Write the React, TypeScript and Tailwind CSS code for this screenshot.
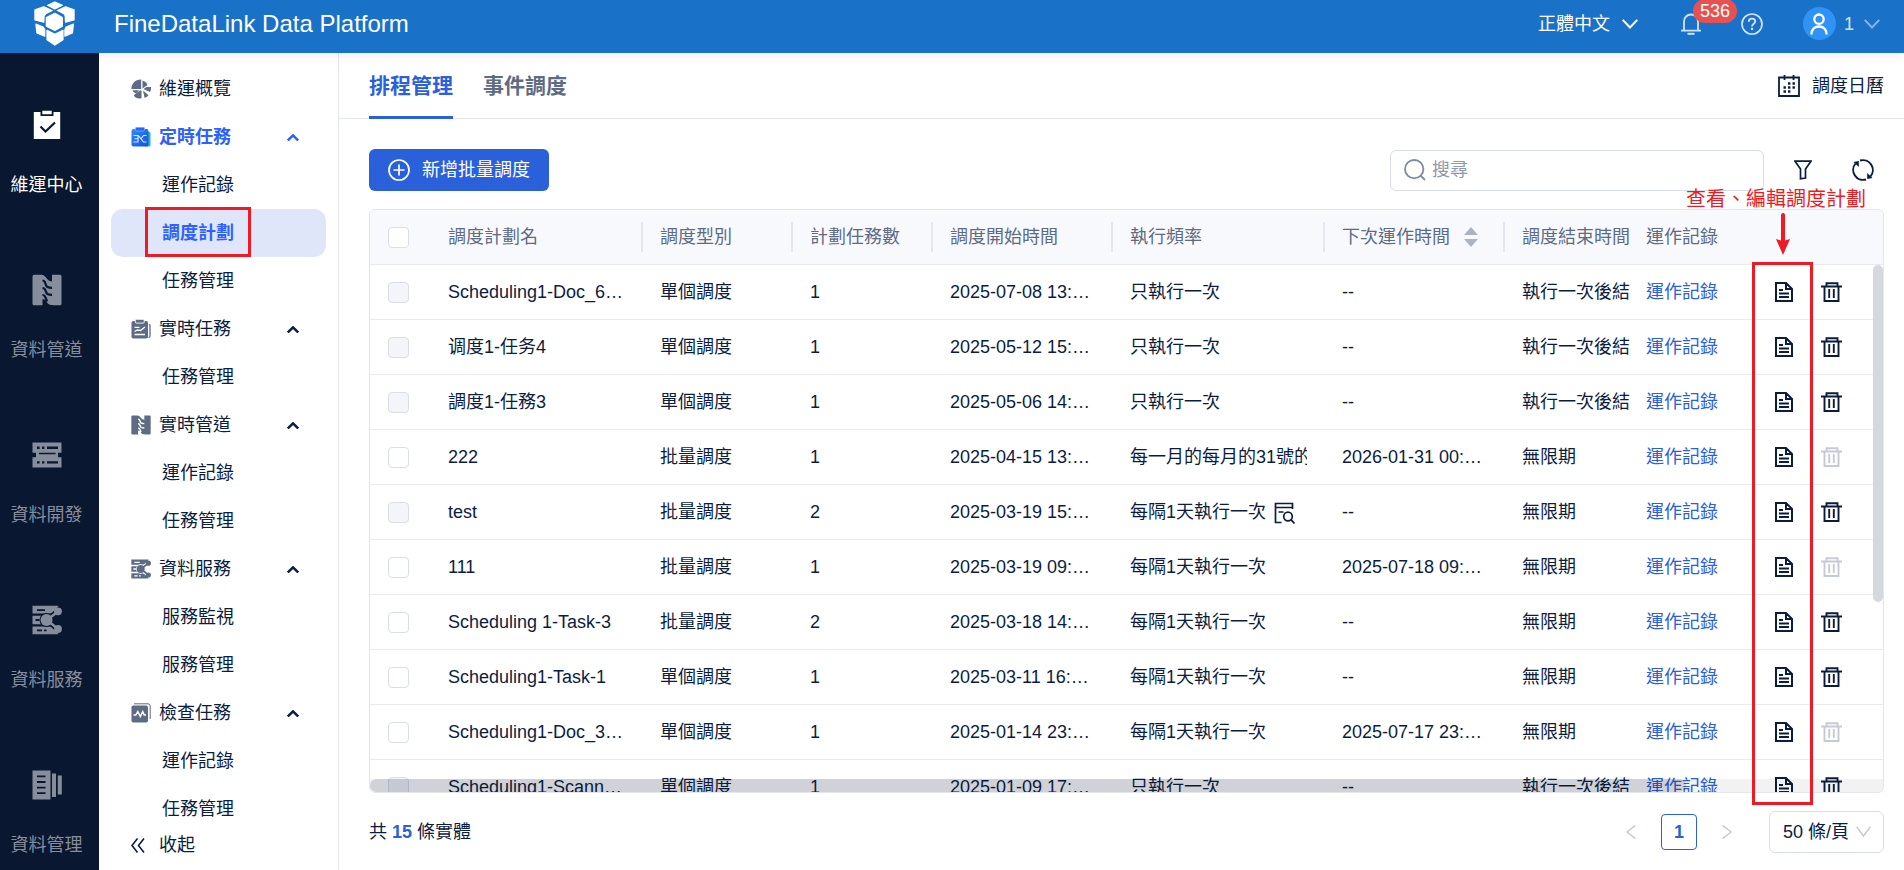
import type { ReactNode } from "react";
import clsx from "clsx";

type Row = {
  name: string;
  type: string;
  count: number;
  start: string;
  freq: string;
  next: string;
  end: string;
  locked?: boolean;
  keep?: boolean;
  detail?: boolean;
};

const ROWS: Row[] = [
  { name: "Scheduling1-Doc_6…", type: "單個調度", count: 1, start: "2025-07-08 13:…", freq: "只執行一次", next: "--", end: "執行一次後結", locked: true },
  { name: "调度1-任务4", type: "單個調度", count: 1, start: "2025-05-12 15:…", freq: "只執行一次", next: "--", end: "執行一次後結", locked: true },
  { name: "調度1-任務3", type: "單個調度", count: 1, start: "2025-05-06 14:…", freq: "只執行一次", next: "--", end: "執行一次後結", locked: true },
  { name: "222", type: "批量調度", count: 1, start: "2025-04-15 13:…", freq: "每一月的每月的31號的", next: "2026-01-31 00:…", end: "無限期", keep: true },
  { name: "test", type: "批量調度", count: 2, start: "2025-03-19 15:…", freq: "每隔1天執行一次", next: "--", end: "無限期", locked: true, detail: true },
  { name: "111", type: "批量調度", count: 1, start: "2025-03-19 09:…", freq: "每隔1天執行一次", next: "2025-07-18 09:…", end: "無限期", keep: true },
  { name: "Scheduling 1-Task-3", type: "批量調度", count: 2, start: "2025-03-18 14:…", freq: "每隔1天執行一次", next: "--", end: "無限期" },
  { name: "Scheduling1-Task-1", type: "單個調度", count: 1, start: "2025-03-11 16:…", freq: "每隔1天執行一次", next: "--", end: "無限期" },
  { name: "Scheduling1-Doc_3…", type: "單個調度", count: 1, start: "2025-01-14 23:…", freq: "每隔1天執行一次", next: "2025-07-17 23:…", end: "無限期", keep: true },
  { name: "Scheduling1-Scann…", type: "單個調度", count: 1, start: "2025-01-09 17:…", freq: "只執行一次", next: "--", end: "執行一次後結", locked: true },
];

const RAIL = [
  { label: "維運中心", icon: <ClipboardIcon />, active: true },
  { label: "資料管道", icon: <PipeIcon size={30} /> },
  { label: "資料開發", icon: <ServerIcon /> },
  { label: "資料服務", icon: <ShareIcon size={30} /> },
  { label: "資料管理", icon: <BooksIcon /> },
];

const MENU = [
  { label: "維運概覽", icon: <OverviewIcon />, items: [] },
  { label: "定時任務", icon: <TimedTaskIcon />, items: ["運作記錄", "調度計劃", "任務管理"], active: true },
  { label: "實時任務", icon: <LiveTaskIcon />, items: ["任務管理"] },
  { label: "實時管道", icon: <PipeIcon size={20} />, items: ["運作記錄", "任務管理"] },
  { label: "資料服務", icon: <ShareIcon size={20} />, items: ["服務監視", "服務管理"] },
  { label: "檢查任務", icon: <CheckTaskIcon />, items: ["運作記錄", "任務管理"] },
];

export default function App() {
  return (
    <div
      lang="zh-Hant"
      className="flex h-screen flex-col overflow-hidden bg-white font-['Liberation_Sans','Noto_Sans_CJK_TC',sans-serif] text-lg leading-6 text-[#0b1d3f]"
    >
      <TopBar />
      <div className="flex min-h-0 flex-1">
        <Rail />
        <Sidebar />
        <main className="flex min-w-0 flex-1 flex-col">
          <Tabs />
          <Toolbar />
          <PlanTable />
          <Footer />
        </main>
      </div>
    </div>
  );
}

function TopBar() {
  return (
    <header className="relative z-10 flex h-[53px] shrink-0 items-center bg-[#1972c7] pr-6 pb-1.5 pl-[34px] text-white shadow-[0_2px_12px_rgba(0,0,0,0.08)]">
      <Logo />
      <h1 className="ml-[39px] text-2xl leading-8">FineDataLink Data Platform</h1>
      <div className="ml-auto flex items-center">
        <button type="button" className="flex items-center gap-3">
          正體中文
          <Chevron className="h-[10px] w-4" />
        </button>
        <button type="button" aria-label="536" className="relative ml-[43px] text-white/80">
          <BellIcon />
          <span className="absolute -top-[14px] left-3 rounded-full bg-[#e65251] px-[7px] text-lg leading-6 text-white">
            536
          </span>
        </button>
        <button type="button" className="ml-10 text-white/80">
          <HelpIcon />
        </button>
        <button type="button" className="ml-10 flex items-center gap-2 text-white/80">
          <span className="flex size-[33px] items-center justify-center rounded-full bg-[#2f93f5] text-white">
            <UserIcon />
          </span>
          1
          <Chevron className="ml-0.5 h-[10px] w-4 opacity-60" />
        </button>
      </div>
    </header>
  );
}

function Rail() {
  return (
    <nav className="flex w-[99px] shrink-0 flex-col overflow-hidden bg-[#0a1731]">
      {RAIL.map((r) => (
        <a
          key={r.label}
          href="#"
          className={clsx(
            "flex h-[165px] shrink-0 flex-col items-center gap-8 pt-14 pr-1.5",
            r.active ? "text-white" : "text-[#868d9b]",
          )}
        >
          <span className="flex h-8 items-center">{r.icon}</span>
          {r.label}
        </a>
      ))}
    </nav>
  );
}

function Sidebar() {
  return (
    <aside className="flex w-60 shrink-0 flex-col overflow-hidden border-r border-[#e3e6ef] px-3 pt-3">
      {MENU.map((g) => (
        <div key={g.label} className="shrink-0">
          <button
            type="button"
            className={clsx(
              "flex h-12 w-full items-center pr-[27px] pl-5",
              g.active ? "font-bold text-[#2c62fb]" : "",
            )}
          >
            <span className="mr-2 w-5 text-[#5d6b84]">{g.icon}</span>
            {g.label}
            {g.items.length > 0 && <Chevron up className="ml-auto h-[7px] w-3" width={2.4} />}
          </button>
          {g.items.map((item) => {
            const selected = item === "調度計劃";
            return (
              <a
                key={item}
                href="#"
                className={clsx(
                  "relative flex h-12 items-center rounded-xl pl-[51px]",
                  selected ? "bg-[#e0e6fa] font-bold text-[#2c62fb]" : "",
                )}
              >
                {item}
                {selected && (
                  <span className="absolute -top-0.5 left-[34px] h-[50px] w-[106px] border-3 border-[#ed1c24]" />
                )}
              </a>
            );
          })}
        </div>
      ))}
      <button type="button" className="flex h-6 shrink-0 items-center gap-[14px] pl-5">
        <svg viewBox="0 0 14 15" className="h-[15px] w-[14px]" fill="none" stroke="currentColor" strokeWidth="1.6">
          <path d="M6.5.5 1 7.5l5.500 7M13 .5 7.500 7.500l5.500 7" />
        </svg>
        收起
      </button>
    </aside>
  );
}

function Tabs() {
  return (
    <div className="flex h-[66px] shrink-0 items-stretch gap-[30px] border-b border-[#e3e6ef] pr-5 pl-[30px]">
      <button type="button" className="-mb-px border-b-3 border-[#2b60db] pt-[3px] text-[21px] font-bold text-[#2b60db]">
        排程管理
      </button>
      <button type="button" className="-mb-px border-b-3 border-transparent pt-[3px] text-[21px] font-bold text-[#5d6b84]">
        事件調度
      </button>
      <button type="button" className="ml-auto flex items-center gap-3">
        <CalendarIcon />
        調度日曆
      </button>
    </div>
  );
}

function Toolbar() {
  return (
    <div className="flex shrink-0 items-center pt-[30px] pr-[30px] pb-[18px] pl-[30px]">
      <button type="button" className="flex h-[42px] items-center gap-3 rounded-md bg-[#2b60db] px-[19px] text-white">
        <PlusCircleIcon />
        新增批量調度
      </button>
      <label className="ml-auto flex h-[41px] w-[374px] items-center gap-2.5 rounded-md border border-[#d9dee8] px-[13px]">
        <SearchIcon />
        <input
          type="search"
          aria-label="搜尋"
          placeholder="搜尋"
          className="w-full min-w-0 bg-transparent outline-none placeholder:text-[#8f99ab]"
        />
      </label>
      <button type="button" className="ml-[30px]">
        <FilterIcon />
      </button>
      <button type="button" className="ml-10">
        <RefreshIcon />
      </button>
    </div>
  );
}

function PlanTable() {
  return (
    <section className="relative mr-5 ml-[30px] min-h-0 flex-1">
      <div className="relative h-full overflow-hidden rounded-md border border-[#e3e6ef]">
        <table className="w-full min-w-[1400px] table-fixed border-separate border-spacing-0 text-left">
          <colgroup>
            <col className="w-[61px]" />
            <col />
            <col className="w-[150px]" />
            <col className="w-[140px]" />
            <col className="w-[180px]" />
            <col className="w-[212px]" />
            <col className="w-[180px]" />
            <col className="w-[124px]" />
            <col className="w-[134px]" />
            <col className="w-10" />
            <col className="w-20" />
          </colgroup>
          <thead>
            <tr className="h-[55px] bg-[#f8f9fd] text-[#5d6b84] *:border-b *:border-[#e8eaef]">
              <th className="pl-[18px]">
                <Tick label="全選" />
              </th>
              <Th divider>調度計劃名</Th>
              <Th divider>調度型別</Th>
              <Th divider>計劃任務數</Th>
              <Th divider>調度開始時間</Th>
              <Th divider>執行頻率</Th>
              <Th divider>
                下次運作時間
                <svg viewBox="0 0 14 20" className="ml-[14px] h-5 w-[14px]" fill="#adb4c1">
                  <path d="M7 0l7 8H0zM7 20l7-8H0z" />
                </svg>
              </Th>
              <Th>調度結束時間</Th>
              <Th>運作記錄</Th>
              <th />
              <th />
            </tr>
          </thead>
          <tbody>
            {ROWS.map((r) => (
              <tr key={r.start} className="h-[55px] *:border-b *:border-[#e8eaef]">
                <td className="pl-[18px]">
                  <Tick label={r.name} disabled={r.locked} />
                </td>
                <Td>{r.name}</Td>
                <Td>{r.type}</Td>
                <Td>{r.count}</Td>
                <Td>{r.start}</Td>
                <Td clip>
                  {r.freq}
                  {r.detail && <DetailIcon />}
                </Td>
                <Td>{r.next}</Td>
                <Td>{r.end}</Td>
                <Td>
                  <a href="#" className="text-[#2b60db]">
                    運作記錄
                  </a>
                </Td>
                <td>
                  <button type="button" className="ml-3 block">
                    <DocIcon />
                  </button>
                </td>
                <td className="pl-[18px]">
                  <button type="button" disabled={r.keep} className="block disabled:text-[#c6cad4]">
                    <TrashIcon />
                  </button>
                </td>
              </tr>
            ))}
          </tbody>
        </table>
        {/* overlay scrollbars */}
        <div className="absolute top-[55px] right-0 h-[337px] w-[10px] rounded-full bg-[#d5d9de]" />
        <div className="absolute inset-x-0 bottom-0 h-[13px] bg-black/5">
          <div className="h-full w-[87%] rounded-full bg-[#0b1d3f]/15" />
        </div>
      </div>
      {/* callout for the plan detail column */}
      <div className="absolute -top-[22px] right-[18px] text-xl leading-6 whitespace-nowrap text-[#ed1c24]">
        查看、編輯調度計劃
      </div>
      <svg viewBox="0 0 14 42" className="absolute top-1 right-[94px] h-[42px] w-[14px]" fill="#ed1c24">
        <path d="M5 2a2 2 0 0 1 4 0v25.500l5-1.500-7 16-7-16 5 1.500z" />
      </svg>
      <div className="absolute top-[53px] right-[71px] -bottom-3 w-[61px] border-3 border-[#ed1c24]" />
    </section>
  );
}

function Th({ children, divider }: { children: ReactNode; divider?: boolean }) {
  return (
    <th className="p-0 font-normal whitespace-nowrap">
      <div className={clsx("flex h-[30px] items-center pl-[17px]", divider && "border-r-2 border-[#e3e6ef]")}>
        {children}
      </div>
    </th>
  );
}

function Td({ children, clip }: { children: ReactNode; clip?: boolean }) {
  return (
    <td className="pl-[17px]">
      <div className={clsx("flex items-center gap-2 whitespace-nowrap", clip && "mr-[18px] overflow-hidden")}>
        {children}
      </div>
    </td>
  );
}

function Tick({ label, disabled }: { label: string; disabled?: boolean }) {
  return (
    <input
      type="checkbox"
      aria-label={label}
      disabled={disabled}
      className="block size-[21px] appearance-none rounded border border-[#d9dee8] bg-white disabled:bg-[#f4f5f8]"
    />
  );
}

function Footer() {
  return (
    <footer className="flex shrink-0 items-center pt-[18px] pr-5 pb-[17px] pl-[30px]">
      <p>
        共 <b className="text-[#2b60db]">15</b> 條實體
      </p>
      <div className="ml-auto flex items-center text-[#c3c9d3]">
        <button type="button" aria-label="‹" className="w-[10px]">
          <svg viewBox="0 0 10 14" className="h-[14px] w-[10px]" fill="none" stroke="currentColor" strokeWidth="1.5">
            <path d="M9.500.5.8 7l8.700 6.500" />
          </svg>
        </button>
        <button type="button" className="mx-[25px] size-9 rounded-sm border border-[#2b60db] font-bold text-[#2b60db]">
          1
        </button>
        <button type="button" aria-label="›" className="w-[10px]">
          <svg viewBox="0 0 10 14" className="h-[14px] w-[10px]" fill="none" stroke="currentColor" strokeWidth="1.5">
            <path d="M.5.5 9.200 7 .5 13.500" />
          </svg>
        </button>
        <div className="relative ml-[37px]">
          <select
            aria-label="條/頁"
            className="h-[42px] w-[115px] appearance-none rounded-md border border-[#d9dee8] bg-white pl-[13px] text-[#0b1d3f]"
          >
            <option>50 條/頁</option>
          </select>
          <svg
            viewBox="0 0 15 11"
            className="pointer-events-none absolute top-[15px] right-[13px] h-[11px] w-[15px]"
            fill="none"
            stroke="currentColor"
            strokeWidth="1.5"
          >
            <path d="M.6.6 7.500 10 14.400.6" />
          </svg>
        </div>
      </div>
    </footer>
  );
}

function Chevron({ className, up, width = 2 }: { className?: string; up?: boolean; width?: number }) {
  return (
    <svg viewBox={up ? "0 0 12 7" : "0 0 16 10"} className={className} fill="none" stroke="currentColor" strokeWidth={width}>
      <path d={up ? "M.8 6.500 6 1.300l5.200 5.200" : "M.7.9 8 8.500 15.300.9"} />
    </svg>
  );
}

function Logo() {
  return (
    <svg viewBox="0 0 126 136" className="h-[45px] w-[41px] shrink-0" fill="#fff" stroke="#fff" strokeWidth="4" strokeLinejoin="round">
      <path d="M42 12 64 2l23 10-23 11z" />
      <path d="M3 26 30 17l26 11-20 10-5 6-1 20L3 57z" />
      <path d="M123 26 97 17 72 28l20 10 4 6 1 20 26-7z" />
      <path d="M64 37 87 50v26L64 89 38 76V50z" />
      <path d="M6 70l22 9 5 8v20L9 97z" />
      <path d="M121 70l-22 9-4 8v20l23-10z" />
      <path d="M40 89l24 12 25-12v29l-25 16-24-16z" />
    </svg>
  );
}

function BellIcon() {
  return (
    <svg viewBox="0 0 20 22" className="h-[22px] w-5" fill="none" stroke="currentColor" strokeWidth="1.8">
      <path d="M0 17.600h20M3 17.600V8.500C3 4.500 6 1.500 10 1.500s7 3 7 7v9.100" />
      <path d="M6.500 20.800h7" strokeWidth="2" />
    </svg>
  );
}

function HelpIcon() {
  return (
    <svg viewBox="0 0 22 22" className="size-[22px]" fill="none" stroke="currentColor" strokeWidth="1.7">
      <circle cx="11" cy="11" r="10" />
      <path d="M7.800 8.800c0-2 1.300-3.200 3.200-3.200s3.200 1.200 3.200 2.900c0 2.200-3.200 2.300-3.200 5" strokeWidth="1.900" />
      <path d="M11 14.800v2.200" strokeWidth="2.200" />
    </svg>
  );
}

function UserIcon() {
  return (
    <svg viewBox="0 0 18 22" className="h-[22px] w-[18px]" fill="none" stroke="currentColor" strokeWidth="2.300">
      <circle cx="9" cy="6.200" r="4.700" />
      <path d="M1.500 21.500c0-5 3-8 7.500-8s7.500 3 7.500 8" />
    </svg>
  );
}

function ClipboardIcon() {
  return (
    <svg viewBox="0 0 28 30" className="h-[30px] w-7">
      <path fill="currentColor" d="M.8 2h6.700v4h13V2h6.700v27H.800zM9.300.8h9.400v3.400H9.300z" />
      <path d="m7.500 16.500 5 5 9.500-9" fill="none" stroke="#0a1731" strokeWidth="2.200" />
    </svg>
  );
}

function PipeIcon({ size }: { size: number }) {
  const large = size === 30;
  return (
    <svg viewBox="0 0 30 32" width={size} height={large ? 32 : 20} preserveAspectRatio="none">
      <path
        fill="currentColor"
        d="M2 .8h7.500c3 0 4.500 3 5.500 4 1.500 2 3 2.700 5 2.700V.800H28a1.500 1.500 0 0 1 1.500 1.500v27.400A1.500 1.500 0 0 1 28 31.200h-6c-4 0-6.500-1-7.500-4-.5-1.500-2-2-4-2v6H2A1.500 1.500 0 0 1 .5 29.700V2.300A1.500 1.500 0 0 1 2 .8z"
      />
      <g fill="none" stroke={large ? "#0a1731" : "#fff"} strokeWidth="2.200">
        <path d="M10.500 6.500c4 0 2 5 5 6.500 1.500.8 3 .8 4.500.8M10.500 14c4 0 2.500 4.500 5 6 1.500.8 3 .8 4.500.8M10.500 21c4 0 2.500 4.500 5 6" />
      </g>
    </svg>
  );
}

function ServerIcon() {
  return (
    <svg viewBox="0 0 30 26" className="h-[26px] w-[30px]" fill="currentColor" fillRule="evenodd">
      <path d="M.5.500h29v10.300h-3.500v4.500h3.500v10.200H.500V15.300H4v-4.500H.500zM5 4.500v2.400h2.600V4.500zm5 0v2.400h2.400V4.500zm5 0v2.400h11V4.500zM7 10.800v1.500h16.500v-1.500zM5 19.200v2.400h2.600v-2.400zm5 0v2.400h2.400v-2.400zm5 0v2.400h11v-2.400z" />
    </svg>
  );
}

function ShareIcon({ size }: { size: number }) {
  const gap = size === 30 ? "#0a1731" : "#fff";
  return (
    <svg viewBox="0 0 30 30" width={size} height={size} fill="currentColor">
      <path d="M.5.800h26L21 8.500H.500zM.5 10.800h9v8.400h-9zM.5 21.500H21l5.500 7.700H.500z" />
      <path d="M5 4.200h8v1.800H5zM3.500 14h4v2h-4zM5 24.500h5v1.800H5zM12 24.500h2.500v1.800H12z" fill={gap} />
      <g stroke={gap} strokeWidth="6">
        <path d="M15 15 26 6.500M15 15l11 9" />
        <circle cx="14.500" cy="15" r="4" />
      </g>
      <circle cx="14.500" cy="15" r="6" />
      <path d="M15 15l11-8.500M15 15l11 9" stroke="currentColor" strokeWidth="2.600" />
      <circle cx="26" cy="6.300" r="3.900" />
      <circle cx="26" cy="24" r="3.900" />
    </svg>
  );
}

function BooksIcon() {
  return (
    <svg viewBox="0 0 30 30" className="size-[30px]" fill="currentColor" fillRule="evenodd">
      <path d="M.5.500h18v29H.500zM5 5.500v1.800h8.500V5.500zm0 5.600v1.800h8.500v-1.800zm0 5.600v1.800h8.500v-1.800zm0 5.600v1.800h8.500v-1.800zM20 3.500h4v23.500h-4zM25.800 5.500h4v19h-4z" />
    </svg>
  );
}

function OverviewIcon() {
  return (
    <svg viewBox="0 0 20 20" className="size-5" fill="currentColor">
      <path d="M10.200 10H.400C.300 4.500 4.500.300 10.200.500z" />
      <path d="M11.500 1.500c2.500.8 4.200 2.500 5 4.500L11.500 9.500z" />
      <path d="M15.500 8H20c.2 2-.2 3.500-1 5L12.500 10z" />
      <path d="M1.500 11.300h6.500l-2.700 3.200C3.500 14 2.100 13 1.500 11.300z" />
      <path d="M10.500 11.500v7.800c-3.200.8-6.500-.2-7.700-3l6-4.800z" />
      <path d="M12 11.500l5.500 4.700c-1.200 1.500-2.500 2.300-4 2.600z" />
    </svg>
  );
}

function TimedTaskIcon() {
  return (
    <svg viewBox="0 0 20 20" className="size-5">
      <defs>
        <linearGradient id="timed" x1="0" y1="0" x2="1" y2="1">
          <stop offset="0" stopColor="#2f8bff" />
          <stop offset="1" stopColor="#1250e0" />
        </linearGradient>
      </defs>
      <path d="M15 5h3.500a1 1 0 0 1 1 1v12a1.500 1.500 0 0 1-1.500 1.500h-4z" fill="#23b9a8" />
      <rect x=".5" y="2" width="17" height="17.500" rx="2" fill="url(#timed)" />
      <rect x="4.500" y=".3" width="9" height="3.700" rx="1" fill="#1f6bf5" stroke="#9cc4ff" strokeWidth=".6" />
      <path d="M2.500 8.500H7v6.500H2.500M3.500 11.700H7M15.500 8.500h-3L10 11.700l2.500 3.300h3M7 8.500l3 3.200" fill="none" stroke="#dbe8ff" strokeWidth="1.100" />
    </svg>
  );
}

function LiveTaskIcon() {
  return (
    <svg viewBox="0 0 20 20" className="size-5">
      <path d="M18 5.500c.8 0 1 .4 1 1V17c0 1-.5 1.500-1.500 1.500" fill="none" stroke="currentColor" strokeWidth="1.300" />
      <rect x=".5" y="2" width="16.500" height="17.500" rx="1.800" fill="currentColor" />
      <rect x="4.300" y=".3" width="8.900" height="3.800" rx="1" fill="currentColor" stroke="#fff" strokeWidth=".9" />
      <path d="M3.500 8.300h5M3.500 12.500l3-1.500 3 .5 4.500-3.500M3.500 15.500h10.500" fill="none" stroke="#fff" strokeWidth="1.300" />
    </svg>
  );
}

function CheckTaskIcon() {
  return (
    <svg viewBox="0 0 20 20" className="size-5">
      <path d="M3 .8h14a2.200 2.200 0 0 1 2.200 2.200v13" fill="none" stroke="currentColor" strokeWidth="1" />
      <rect x=".5" y="2.500" width="16.500" height="17" rx="1.800" fill="currentColor" />
      <path d="M2.500 12h2.300l2-3.500 2.500 5 2.400-5 1.500 3.500h1.800" fill="none" stroke="#fff" strokeWidth="1.500" />
    </svg>
  );
}

function CalendarIcon() {
  return (
    <svg viewBox="0 0 22 22" className="size-[22px]" fill="none" stroke="currentColor" strokeWidth="1.800">
      <path d="M1 2.500h20v18.500H1zM6.500 0v5M15.500 0v5" />
      <path
        d="M10 8.500h2.400M14.500 8.500h2.400M5.500 12.500h2.400M10 12.500h2.400M14.500 12.500h2.400M5.500 16.500h2.400M10 16.500h2.400"
        strokeWidth="2.400"
      />
    </svg>
  );
}

function PlusCircleIcon() {
  return (
    <svg viewBox="0 0 22 22" className="size-[22px]" fill="none" stroke="currentColor" strokeWidth="1.700">
      <circle cx="11" cy="11" r="10" />
      <path d="M11 5.500v11M5.500 11h11" />
    </svg>
  );
}

function SearchIcon() {
  return (
    <svg viewBox="0 0 22 22" className="-mr-1 size-[22px] shrink-0" fill="none" stroke="#7f8a9c" strokeWidth="1.800">
      <circle cx="10.200" cy="10.200" r="9.200" />
      <path d="m16.500 16.500 4.500 4.500" />
    </svg>
  );
}

function FilterIcon() {
  return (
    <svg viewBox="0 0 18 20" className="h-5 w-[18px]" fill="none" stroke="currentColor" strokeWidth="1.700">
      <path d="M1 1.200h16L11.500 9v9l-5 .8V9z" />
    </svg>
  );
}

function RefreshIcon() {
  return (
    <svg viewBox="0 0 22 22" className="size-[22px]" fill="none" stroke="currentColor" strokeWidth="1.900">
      <path d="M8 1.500A10 10 0 0 1 18.500 17.500M14 20.500A10 10 0 0 1 3.500 4.500" />
      <path d="M1.500 3 6.800 2v6zM20.500 19 15.200 20v-6z" fill="currentColor" stroke="none" />
    </svg>
  );
}

function DetailIcon() {
  return (
    <svg viewBox="0 0 21 22" className="mt-0.5 h-[22px] w-[21px] shrink-0" fill="none" stroke="currentColor" strokeWidth="1.700">
      <path d="M7.500 20.500H1.500V1.500h17V7M1.500 5.500h17M4.500 10h5" />
      <circle cx="14" cy="14.500" r="4.300" />
      <path d="m17 17.700 3.500 3.800" />
    </svg>
  );
}

function DocIcon() {
  return (
    <svg viewBox="0 0 18 20" className="h-5 w-[18px]" fill="none" stroke="currentColor" strokeWidth="2">
      <path d="M1 1h10l6 6v12H1zM11 1v6h6M4 8h4M4 11.500h10M4 15h10" />
    </svg>
  );
}

function TrashIcon() {
  return (
    <svg viewBox="0 0 21 20" className="h-5 w-[21px]" fill="none" stroke="currentColor" strokeWidth="1.900">
      <path d="M0 4.500h21M5.500 4.500V1.200h11v3.300M3.500 4.500V19h14V4.500M8.200 7v9M12.800 7v9" />
    </svg>
  );
}
